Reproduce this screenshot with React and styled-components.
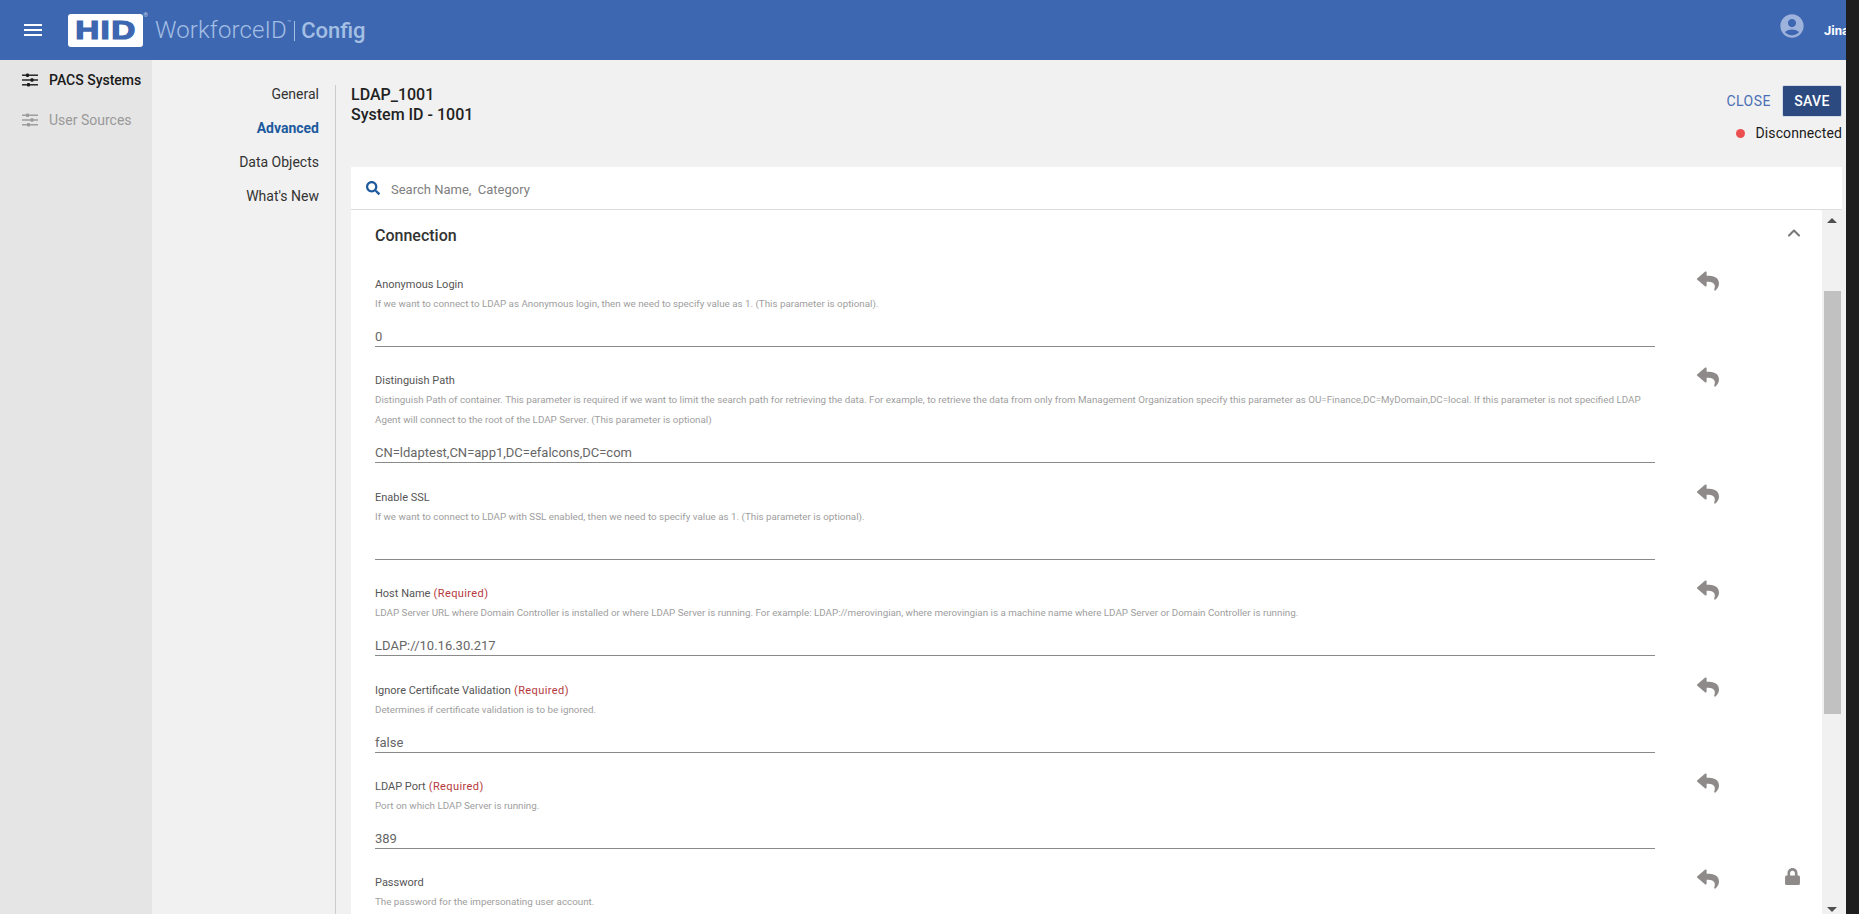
import React from 'react';
import styled, { createGlobalStyle } from 'styled-components';
import { FaReply, FaLock, FaSearch } from 'react-icons/fa';
import { MdAccountCircle } from 'react-icons/md';
import { ChevronUp } from 'lucide-react';

const GlobalStyle = createGlobalStyle`
  html, body, #root {
    margin: 0;
    height: 100%;
    overflow: hidden;
  }
  * { box-sizing: border-box; }
  body {
    font-family: Roboto, "Liberation Sans", sans-serif;
    background: #1e1e1e;
  }
`;

const Page = styled.div`
  display: flex;
  height: 914px;
`;

const Shell = styled.div`
  flex: 1;
  min-width: 0;
  display: flex;
  flex-direction: column;
  overflow: hidden;
`;

const DarkEdge = styled.div`
  width: 13px;
  background: #1e1e1e;
`;

const Header = styled.header`
  height: 60px;
  flex: none;
  background: #3e67b1;
  display: flex;
  align-items: center;
  padding-left: 24px;
  overflow: hidden;
`;

const Burger = styled.div`
  width: 18px;
  height: 12px;
  display: flex;
  flex-direction: column;
  justify-content: space-between;
  margin-right: 26px;
  & > span {
    height: 2px;
    background: #fff;
  }
`;

const LogoBadge = styled.div`
  position: relative;
  width: 75px;
  height: 33px;
  margin-right: 12px;
  background: #fff;
  border-radius: 3px;
  display: flex;
  align-items: center;
  justify-content: center;
  overflow: visible;
  &::after {
    content: '®';
    position: absolute;
    top: -3px;
    right: -5px;
    font-size: 6px;
    color: #cfdcf0;
  }
`;

const LogoText = styled.span`
  font-family: "Liberation Sans", sans-serif;
  font-weight: 700;
  font-size: 26px;
  line-height: 26px;
  color: #3e67b1;
  letter-spacing: 1px;
  transform: scale(1.28, 0.98);
  -webkit-text-stroke: 1.2px #3e67b1;
`;

const Brand = styled.span`
  font-size: 24px;
  font-weight: 300;
  color: #a3bfe4;
  letter-spacing: 0.1px;
`;

const Tm = styled.sup`
  font-size: 7px;
  vertical-align: 13px;
  line-height: 0;
`;

const BrandDivider = styled.span`
  width: 1px;
  height: 20px;
  background: #a3bfe4;
  margin: 2px 6px 0 3px;
`;

const BrandStrong = styled.span`
  font-size: 22px;
  font-weight: 500;
  color: #a3bfe4;
`;

const HeaderUser = styled.div`
  margin-left: auto;
  display: flex;
  align-items: center;
  flex: none;
  width: 68px;
  margin-top: -8px;
`;

const Avatar = styled(MdAccountCircle)`
  flex: none;
  color: #9db3dc;
`;

const UserName = styled.span`
  margin-left: 18px;
  margin-top: 8px;
  font-size: 13px;
  font-weight: 700;
  color: #fff;
  white-space: nowrap;
`;

const Body = styled.div`
  flex: 1;
  min-height: 0;
  display: flex;
`;

const SideNav = styled.nav`
  width: 152px;
  flex: none;
  background: #e5e5e5;
  padding-top: 6px;
`;

const SideItem = styled.div`
  height: 28px;
  margin-bottom: 12px;
  display: flex;
  align-items: center;
  gap: 11px;
  padding-left: 22px;
  font-size: 14px;
  font-weight: ${p => (p.$active ? 500 : 400)};
  color: ${p => (p.$active ? '#1a1a1a' : '#999')};
`;

const SubNavWrap = styled.div`
  width: 183px;
  flex: none;
  background: #f1f1f1;
  padding-top: 17px;
  padding-right: 16px;
  display: flex;
  flex-direction: column;
  align-items: flex-end;
  font-size: 14px;
`;

const SubItem = styled.div`
  height: 34px;
  line-height: 34px;
  color: ${p => (p.$active ? '#1d5a9e' : '#333')};
  font-weight: ${p => (p.$active ? 700 : 400)};
`;

const Main = styled.main`
  flex: 1;
  min-width: 0;
  background: #f1f1f1;
  padding: 25px 4px 0 16px;
  display: flex;
  flex-direction: column;
  position: relative;
  &::before {
    content: '';
    position: absolute;
    left: 0;
    top: 25px;
    bottom: 0;
    width: 1px;
    background: #ccc;
  }
`;

const TopRow = styled.div`
  height: 82px;
  flex: none;
  display: flex;
  justify-content: space-between;
`;

const Title = styled.div`
  font-size: 16px;
  line-height: 19.5px;
  font-weight: 500;
  color: #222;
`;

const Actions = styled.div`
  display: flex;
  flex-direction: column;
  align-items: flex-end;
`;

const ButtonRow = styled.div`
  display: flex;
  align-items: center;
  gap: 11px;
`;

const CloseButton = styled.button`
  background: none;
  border: 0;
  padding: 0;
  font: 400 14px Roboto, sans-serif;
  letter-spacing: 0.5px;
  color: #4a6fb5;
`;

const SaveButton = styled.button`
  width: 60px;
  height: 32px;
  background: #2c4a80;
  border: 1px solid #d5dbe6;
  border-radius: 2px;
  padding: 0;
  font: 500 14px Roboto, sans-serif;
  letter-spacing: 0.4px;
  color: #fff;
`;

const Status = styled.div`
  display: flex;
  align-items: center;
  gap: 11px;
  margin-top: 7px;
  font-size: 14px;
  line-height: 18px;
  color: #1a1a1a;
  letter-spacing: 0.1px;
`;

const Dot = styled.span`
  width: 9px;
  height: 9px;
  border-radius: 50%;
  background: #ec4f50;
`;

const SearchBar = styled.div`
  height: 43px;
  flex: none;
  background: #fff;
  border-bottom: 1px solid #ddd;
  display: flex;
  align-items: center;
  gap: 11px;
  padding-left: 15px;
  color: #1d5a9e;
`;

const SearchInput = styled.input`
  flex: 1;
  border: 0;
  outline: 0;
  padding: 2px 0 0;
  font: 400 13px Roboto, sans-serif;
  color: #666;
  &::placeholder { color: #808080; opacity: 1; }
`;

const ScrollArea = styled.div`
  flex: 1;
  min-height: 0;
  display: flex;
`;

const Content = styled.div`
  flex: 1;
  min-width: 0;
  background: #fff;
  overflow: hidden;
`;

const SectionHead = styled.div`
  height: 67px;
  display: flex;
  align-items: flex-start;
  justify-content: space-between;
  padding: 16px 18px 0 24px;
  font-size: 16px;
  line-height: 20px;
  font-weight: 500;
  color: #333;
`;

const Chevron = styled(ChevronUp)`
  color: #777;
  margin-top: -3px;
`;

const FieldRow = styled.div`
  display: grid;
  grid-template-columns: 1280px 22px 71px 15px;
  column-gap: 12px;
  padding-left: 24px;
  padding-bottom: 26.4px;
`;

const FieldBody = styled.div`
  grid-column: 1;
  min-width: 0;
`;

const Label = styled.div`
  font-size: 11px;
  line-height: 16px;
  color: #555;
`;

const Required = styled.span`
  color: #b5393d;
  letter-spacing: 0.4px;
`;

const Desc = styled.div`
  margin-top: 1px;
  font-size: 9.8px;
  line-height: 19px;
  color: #9e9e9e;
`;

const ValueInput = styled.input`
  display: block;
  width: 100%;
  height: 34px;
  border: 0;
  border-bottom: 1px solid #8a8a8a;
  outline: 0;
  padding: 14px 0 0;
  font: 400 13px Roboto, sans-serif;
  line-height: 18px;
  color: #666;
  background: transparent;
`;

const ResetIcon = styled(FaReply)`
  grid-column: 2;
  color: #8f8a8a;
  margin-top: -7px;
  margin-left: 30px;
`;

const LockIcon = styled(FaLock)`
  grid-column: 4;
  color: #8f8a8a;
  margin-top: -7px;
`;

const ScrollBar = styled.div`
  width: 20px;
  flex: none;
  background: #f1f1f1;
  display: flex;
  flex-direction: column;
  align-items: center;
  padding-top: 8px;
`;

const ArrowUp = styled.div`
  width: 0;
  height: 0;
  border-left: 5px solid transparent;
  border-right: 5px solid transparent;
  border-bottom: 5px solid #505050;
`;

const ArrowDown = styled(ArrowUp)`
  border-bottom: 0;
  border-top: 5px solid #505050;
  margin-top: auto;
  margin-bottom: 2px;
`;

const Thumb = styled.div`
  width: 17px;
  height: 423px;
  margin-top: 68px;
  background: #c1c1c1;
`;

function SlidersIcon() {
  return (
    <svg width="16" height="14" viewBox="0 0 16 14" fill="currentColor">
      <rect x="0" y="1.5" width="16" height="1.4" />
      <rect x="0" y="6.3" width="16" height="1.4" />
      <rect x="0" y="11.1" width="16" height="1.4" />
      <rect x="4" y="0.4" width="3" height="3.6" rx="1" />
      <rect x="8.5" y="5.2" width="3" height="3.6" rx="1" />
      <rect x="5" y="10" width="3" height="3.6" rx="1" />
    </svg>
  );
}

const fields = [
  {
    name: 'Anonymous Login',
    desc: ['If we want to connect to LDAP as Anonymous login, then we need to specify value as 1. (This parameter is optional).'],
    value: '0',
  },
  {
    name: 'Distinguish Path',
    desc: [
      'Distinguish Path of container. This parameter is required if we want to limit the search path for retrieving the data. For example, to retrieve the data from only from Management Organization specify this parameter as OU=Finance,DC=MyDomain,DC=local. If this parameter is not specified LDAP',
      'Agent will connect to the root of the LDAP Server. (This parameter is optional)',
    ],
    value: 'CN=ldaptest,CN=app1,DC=efalcons,DC=com',
  },
  {
    name: 'Enable SSL',
    desc: ['If we want to connect to LDAP with SSL enabled, then we need to specify value as 1. (This parameter is optional).'],
    value: '',
  },
  {
    name: 'Host Name',
    required: true,
    desc: ['LDAP Server URL where Domain Controller is installed or where LDAP Server is running. For example: LDAP://merovingian, where merovingian is a machine name where LDAP Server or Domain Controller is running.'],
    value: 'LDAP://10.16.30.217',
  },
  {
    name: 'Ignore Certificate Validation',
    required: true,
    desc: ['Determines if certificate validation is to be ignored.'],
    value: 'false',
  },
  {
    name: 'LDAP Port',
    required: true,
    desc: ['Port on which LDAP Server is running.'],
    value: '389',
  },
  {
    name: 'Password',
    locked: true,
    desc: ['The password for the impersonating user account.'],
    value: '',
  },
];

export default function App() {
  return (
    <Page>
      <GlobalStyle />
      <Shell>
        <Header>
          <Burger><span /><span /><span /></Burger>
          <LogoBadge><LogoText>HID</LogoText></LogoBadge>
          <Brand>WorkforceID<Tm>™</Tm></Brand>
          <BrandDivider />
          <BrandStrong>Config</BrandStrong>
          <HeaderUser>
            <Avatar size={28} />
            <UserName>Jina</UserName>
          </HeaderUser>
        </Header>
        <Body>
          <SideNav>
            <SideItem $active><SlidersIcon />PACS Systems</SideItem>
            <SideItem><SlidersIcon />User Sources</SideItem>
          </SideNav>
          <SubNavWrap>
            <SubItem>General</SubItem>
            <SubItem $active>Advanced</SubItem>
            <SubItem>Data Objects</SubItem>
            <SubItem>What's New</SubItem>
          </SubNavWrap>
          <Main>
            <TopRow>
              <Title>LDAP_1001<br />System ID - 1001</Title>
              <Actions>
                <ButtonRow>
                  <CloseButton>CLOSE</CloseButton>
                  <SaveButton>SAVE</SaveButton>
                </ButtonRow>
                <Status><Dot />Disconnected</Status>
              </Actions>
            </TopRow>
            <SearchBar>
              <FaSearch size={14} />
              <SearchInput placeholder="Search Name,  Category" readOnly />
            </SearchBar>
            <ScrollArea>
              <Content>
                <SectionHead>
                  Connection
                  <Chevron size={20} strokeWidth={2.5} />
                </SectionHead>
                {fields.map(f => (
                  <FieldRow key={f.name}>
                    <FieldBody>
                      <Label>
                        {f.name}
                        {f.required && <Required> (Required)</Required>}
                      </Label>
                      {f.desc.map(line => <Desc key={line}>{line}</Desc>)}
                      <ValueInput defaultValue={f.value} readOnly />
                    </FieldBody>
                    <ResetIcon size={22} />
                    {f.locked && <LockIcon size={17} />}
                  </FieldRow>
                ))}
              </Content>
              <ScrollBar>
                <ArrowUp />
                <Thumb />
                <ArrowDown />
              </ScrollBar>
            </ScrollArea>
          </Main>
        </Body>
      </Shell>
      <DarkEdge />
    </Page>
  );
}
